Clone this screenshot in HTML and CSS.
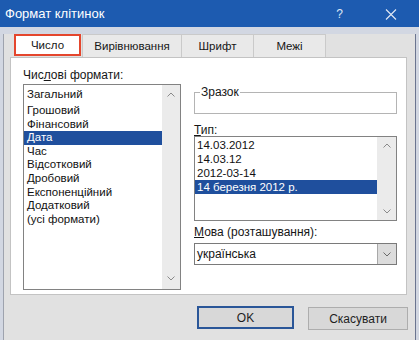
FILE: index.html
```html
<!DOCTYPE html>
<html>

<head>
    <meta charset="UTF-8">
    <title>Формат клітинок</title>
    <link rel="stylesheet" href="styles.css">
</head>

<body>
    <div class="window">
        <!-- title bar -->
        <div class="titlebar">
            <span class="title">Формат клітинок</span>
            <span class="help">?</span>
            <svg class="close" width="12" height="11" viewBox="0 0 12 11">
                <path d="M1 0.5L11 10.5M11 0.5L1 10.5" stroke="#e2e9f4" stroke-width="1.1" fill="none"/>
            </svg>
        </div>

        <div class="frame">
            <div class="tabs">
                <div class="tab tab-active">Число</div>
                <div class="tab tab-align">Вирівнювання</div>
                <div class="tab tab-font">Шрифт</div>
                <div class="tab tab-border">Межі</div>
            </div>

            <div class="panel">
                <div class="col-left">
                    <div class="label">Чис<u>л</u>ові формати:</div>
                    <div class="listbox cat-list">
                        <ul class="items">
                            <li class="first">Загальний</li>
                            <li>Грошовий</li>
                            <li>Фінансовий</li>
                            <li class="selected">Дата</li>
                            <li>Час</li>
                            <li>Відсотковий</li>
                            <li>Дробовий</li>
                            <li>Експоненційний</li>
                            <li>Додатковий</li>
                            <li>(усі формати)</li>
                        </ul>
                        <div class="scrollbar">
                            <svg width="8" height="5" viewBox="0 0 8 5"><path d="M0.5 4.5L4 1L7.5 4.5" stroke="#8a8a8a" fill="none"/></svg>
                            <svg width="8" height="5" viewBox="0 0 8 5"><path d="M0.5 0.5L4 4L7.5 0.5" stroke="#8a8a8a" fill="none"/></svg>
                        </div>
                    </div>
                </div>

                <div class="col-right">
                    <fieldset class="sample">
                        <legend>Зразок</legend>
                    </fieldset>

                    <div class="label type-label"><u>Т</u>ип:</div>
                    <div class="listbox type-list">
                        <ul class="items">
                            <li>14.03.2012</li>
                            <li>14.03.12</li>
                            <li>2012-03-14</li>
                            <li class="selected">14 березня 2012 р.</li>
                        </ul>
                        <div class="scrollbar scrollbar-wide">
                            <svg width="8" height="5" viewBox="0 0 8 5"><path d="M0.5 4.5L4 1L7.5 4.5" stroke="#8a8a8a" fill="none"/></svg>
                            <svg width="8" height="5" viewBox="0 0 8 5"><path d="M0.5 0.5L4 4L7.5 0.5" stroke="#8a8a8a" fill="none"/></svg>
                        </div>
                    </div>

                    <div class="label lang-label"><u>М</u>ова (розташування):</div>
                    <div class="select">
                        <span class="select-value">українська</span>
                        <div class="select-btn">
                            <svg width="8" height="5" viewBox="0 0 8 5"><path d="M0.5 0.5L4 4L7.5 0.5" stroke="#6a6a6a" fill="none"/></svg>
                        </div>
                    </div>
                </div>
            </div>

            <div class="buttons">
                <button type="button" class="btn btn-ok">OK</button>
                <button type="button" class="btn btn-cancel">Скасувати</button>
            </div>
        </div>
    </div>
</body>

</html>
```

FILE: styles.css
```css
body {
    margin: 0;
    background-color: #d2d7e2;
    font-family: "Liberation Sans", Arial, sans-serif;
    font-size: 12px;
    color: #161616;
}

.window {
    width: 419px;
    height: 340px;
    overflow: hidden;
}

/* title bar */
.titlebar {
    height: 27px;
    background-color: #1d5bb0;
    display: flex;
    align-items: center;
    color: #FFFFFF;
}

.title {
    flex: 1;
    font-size: 13px;
    padding-left: 5px;
}

.help {
    font-size: 12px;
    color: #dfe8f5;
    margin-right: 42px;
}

.close {
    margin-right: 22px;
    margin-top: 1px;
}

/* dialog body */
.frame {
    margin: 0 3px;
    height: 310px;
    background-color: #e1e1e1;
    border-left: 1px solid #9ea3ae;
    border-right: 1px solid #6b7590;
    border-bottom: 1px solid #4d5b7c;
}

.tabs {
    display: flex;
    align-items: flex-start;
    height: 23px;
    margin: 7px 0 0 10px;
    font-size: 11.5px;
}

.tab {
    box-sizing: border-box;
    height: 23px;
    line-height: 22px;
    text-align: center;
    background-color: #e9e9e9;
    border-top: 1px solid #cacaca;
    border-left: 1px solid #cacaca;
}

.tab-active {
    width: 67px;
    height: 22px;
    line-height: 18px;
    margin-right: 1px;
    background-color: #FFFFFF;
    border: 2px solid #e4462d;
}

.tab-align {
    width: 99px;
}

.tab-font {
    width: 72px;
}

.tab-border {
    width: 73px;
    border-right: 1px solid #cacaca;
}

.panel {
    box-sizing: border-box;
    width: 397px;
    height: 238px;
    margin-left: 6px;
    padding: 10px 9px 0 12px;
    background-color: #FFFFFF;
    border: 1px solid #c3c3c3;
    display: flex;
}

.col-left {
    width: 158px;
    margin-right: 13px;
}

.col-right {
    width: 203px;
}

.label {
    line-height: 14px;
    height: 14px;
    margin-bottom: 2px;
}

/* list boxes */
.listbox {
    box-sizing: border-box;
    border: 1px solid #828282;
    display: flex;
}

.items {
    flex: 1;
    list-style: none;
    margin: 0;
    padding: 1px 0 0;
    font-size: 11.5px;
    color: #111111;
}

.items li {
    line-height: 14px;
    padding-left: 2px;
    white-space: nowrap;
}

.items .selected {
    background-color: #1f4f9d;
    color: #FFFFFF;
}

.cat-list {
    height: 206px;
}

.cat-list .items {
    padding-top: 2px;
}

.cat-list li {
    line-height: 13.6px;
    padding-left: 3px;
}

.cat-list li.first {
    line-height: 14px;
    margin-bottom: 3px;
}

.scrollbar {
    width: 18px;
    padding: 7px 0 8px;
    background-color: #ebebeb;
    display: flex;
    flex-direction: column;
    justify-content: space-between;
    align-items: center;
}

.scrollbar-wide {
    width: 19px;
    padding: 6px 0 6px;
}

.sample {
    box-sizing: border-box;
    height: 29px;
    margin: 17px 0 0;
    padding: 0;
    border: 1px solid #b4b4b4;
}

.sample legend {
    margin-left: 5px;
    padding: 0 1px;
    line-height: 14px;
}

.type-label {
    line-height: 12px;
    height: 12px;
    margin: 10px 0 0;
}

.type-list {
    height: 85px;
}

.lang-label {
    line-height: 12px;
    height: 12px;
    margin: 5px 0 5px;
}

.select {
    box-sizing: border-box;
    height: 22px;
    border: 1px solid #7a7a7a;
    display: flex;
}

.select-value {
    flex: 1;
    line-height: 20px;
    padding-left: 2px;
}

.select-btn {
    width: 18px;
    background-color: #dcdcdc;
    border-left: 1px solid #a8a8a8;
    display: flex;
    align-items: center;
    justify-content: center;
}

/* bottom buttons */
.buttons {
    display: flex;
    justify-content: flex-end;
    align-items: flex-start;
    gap: 14px;
    padding-right: 7px;
    margin-top: 11px;
}

.btn {
    box-sizing: border-box;
    height: 23px;
    padding: 0;
    font-family: "Liberation Sans", Arial, sans-serif;
    font-size: 12px;
    color: #1e1e1e;
    background-color: #d8d8d8;
    border: 1px solid #adadad;
}

.btn-ok {
    width: 97px;
    border: 2px solid #2a5698;
}

.btn-cancel {
    width: 100px;
    margin-top: 1px;
}
```
